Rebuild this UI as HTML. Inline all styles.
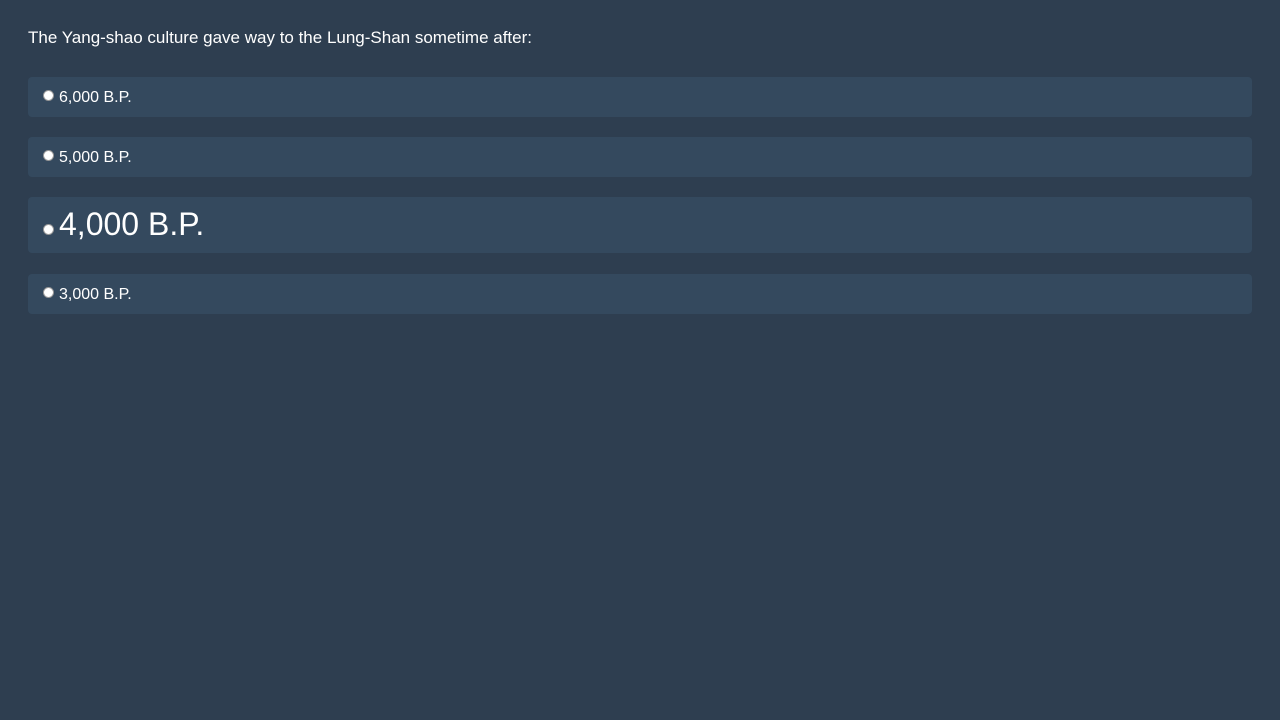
<!DOCTYPE html>
<html><head><style>
body{margin:0;width:1280px;height:720px;background:#2e3e50;font-family:"Liberation Sans",sans-serif;color:#fff;position:relative;overflow:hidden}
.q{position:absolute;left:28px;top:28px;font-size:17px;line-height:20px}
.o{position:absolute;left:28px;width:1224px;background:#34495e;border-radius:4px}
.r{position:absolute;left:15px;width:11px;height:11px;border-radius:50%;background:#fff;border:1px solid #999;box-sizing:border-box}
.t{position:absolute;left:31px;font-size:16px;line-height:18px}
</style></head><body>
<div class="q">The Yang-shao culture gave way to the Lung-Shan sometime after:</div>
<div class="o" style="top:77px;height:40px"><div class="r" style="top:13px"></div><div class="t" style="top:12px">6,000 B.P.</div></div>
<div class="o" style="top:137px;height:40px"><div class="r" style="top:13px"></div><div class="t" style="top:12px">5,000 B.P.</div></div>
<div class="o" style="top:197px;height:56px"><div class="r" style="top:27px"></div><div class="t" style="top:9px;font-size:32px;line-height:36px">4,000 B.P.</div></div>
<div class="o" style="top:274px;height:40px"><div class="r" style="top:13px"></div><div class="t" style="top:12px">3,000 B.P.</div></div>
</body></html>
